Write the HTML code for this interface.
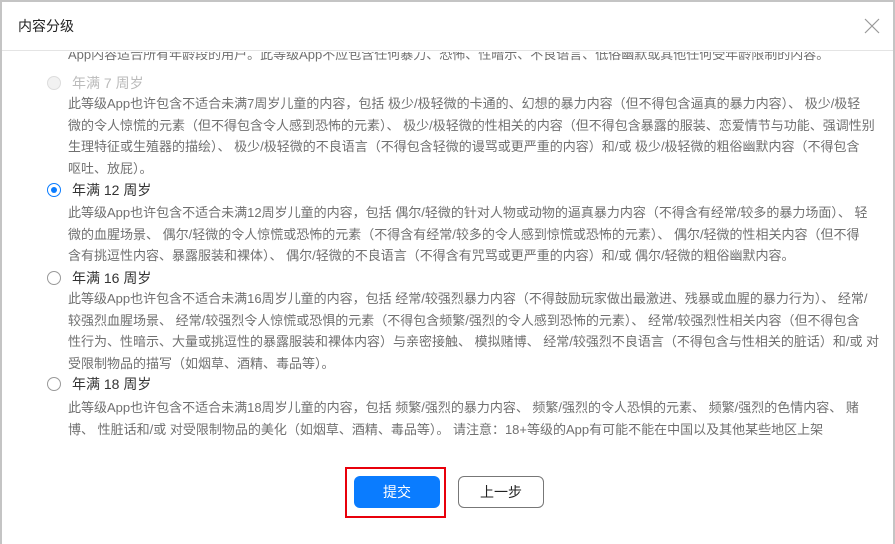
<!DOCTYPE html>
<html><head><meta charset="utf-8"><style>
*{margin:0;padding:0;box-sizing:border-box}
html,body{width:895px;height:544px;overflow:hidden;background:#fff}
body{font-family:"Liberation Sans","Noto Sans CJK SC",sans-serif;position:relative}
.frame{position:absolute;left:0;top:0;width:895px;height:544px;border:2px solid #c4c4c4;border-bottom:none}
.hdr{position:absolute;left:2px;top:2px;right:2px;height:49px;border-bottom:1px solid #e4e4e4}
.title{position:absolute;left:16px;top:14px;font-size:14px;color:#222}
.x{position:absolute;left:862px;top:16px}
.body{position:absolute;left:2px;top:52px;width:891px;height:388px;overflow:hidden}
.p{position:absolute;left:66px;font-size:13px;color:#707070;line-height:21.6px;white-space:nowrap}
.lab{position:absolute;left:70px;font-size:14px;color:#333;line-height:20px;white-space:nowrap}
.r{position:absolute;left:45px;width:14px;height:14px;border:1px solid #999;border-radius:50%;background:#fff}
.btn{position:absolute;top:476px;height:32px;border-radius:6px;font-size:14px;text-align:center;line-height:32px}
</style></head><body>
<div class="frame"></div>
<div class="hdr"><div class="title">内容分级</div>
<svg class="x" width="16" height="16" viewBox="0 0 16 16"><path d="M1 1L15 15M15 1L1 15" stroke="#999" stroke-width="1.2"/></svg></div>
<div class="body">
<div class="p" style="top:-8px">App内容适合所有年龄段的用户。此等级App不应包含任何暴力、恐怖、性暗示、不良语言、低俗幽默或其他任何受年龄限制的内容。</div>
<div class="r" style="top:24px;border-color:#ddd;background:#f2f2f2"></div>
<div class="lab" style="top:21px;color:#bbb">年满 7 周岁</div>
<div class="p" style="top:41px">此等级App也许包含不适合未满7周岁儿童的内容，包括 极少/极轻微的卡通的、幻想的暴力内容（但不得包含逼真的暴力内容）、 极少/极轻<br>微的令人惊慌的元素（但不得包含令人感到恐怖的元素）、 极少/极轻微的性相关的内容（但不得包含暴露的服装、恋爱情节与功能、强调性别<br>生理特征或生殖器的描绘）、 极少/极轻微的不良语言（不得包含轻微的谩骂或更严重的内容）和/或 极少/极轻微的粗俗幽默内容（不得包含<br>呕吐、放屁）。</div>
<div class="r" style="top:131px;border-color:#0a7cff"><div style="position:absolute;left:3px;top:3px;width:6px;height:6px;border-radius:50%;background:#0a7cff"></div></div>
<div class="lab" style="top:128px">年满 12 周岁</div>
<div class="p" style="top:150px">此等级App也许包含不适合未满12周岁儿童的内容，包括 偶尔/轻微的针对人物或动物的逼真暴力内容（不得含有经常/较多的暴力场面）、 轻<br>微的血腥场景、 偶尔/轻微的令人惊慌或恐怖的元素（不得含有经常/较多的令人感到惊慌或恐怖的元素）、 偶尔/轻微的性相关内容（但不得<br>含有挑逗性内容、暴露服装和裸体）、 偶尔/轻微的不良语言（不得含有咒骂或更严重的内容）和/或 偶尔/轻微的粗俗幽默内容。</div>
<div class="r" style="top:219px"></div>
<div class="lab" style="top:216px">年满 16 周岁</div>
<div class="p" style="top:236px">此等级App也许包含不适合未满16周岁儿童的内容，包括 经常/较强烈暴力内容（不得鼓励玩家做出最激进、残暴或血腥的暴力行为）、 经常/<br>较强烈血腥场景、 经常/较强烈令人惊慌或恐惧的元素（不得包含频繁/强烈的令人感到恐怖的元素）、 经常/较强烈性相关内容（但不得包含<br>性行为、性暗示、大量或挑逗性的暴露服装和裸体内容）与亲密接触、 模拟赌博、 经常/较强烈不良语言（不得包含与性相关的脏话）和/或 对<br>受限制物品的描写（如烟草、酒精、毒品等）。</div>
<div class="r" style="top:325px"></div>
<div class="lab" style="top:322px">年满 18 周岁</div>
<div class="p" style="top:345px">此等级App也许包含不适合未满18周岁儿童的内容，包括 频繁/强烈的暴力内容、 频繁/强烈的令人恐惧的元素、 频繁/强烈的色情内容、 赌<br>博、 性脏话和/或 对受限制物品的美化（如烟草、酒精、毒品等）。 请注意：18+等级的App有可能不能在中国以及其他某些地区上架</div>
</div>
<div style="position:absolute;left:345px;top:467px;width:101px;height:51px;border:2px solid #e8000b"></div>
<div class="btn" style="left:354px;width:86px;background:#0a7cff;color:#fff">提交</div>
<div class="btn" style="left:458px;width:86px;border:1px solid #777;color:#222;line-height:30px">上一步</div>
</body></html>
